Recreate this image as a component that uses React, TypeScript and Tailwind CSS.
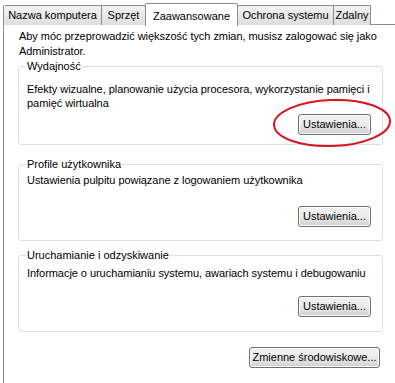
import React from "react";

const font = { fontFamily: '"Liberation Sans", Arial, sans-serif' };

function Tab({ label, w, selected }: { label: string; w: string; selected?: boolean }) {
  return selected ? (
    <div
      className={`${w} h-[23px] -ml-px mb-[-1px] relative z-10 border border-b-0 border-[#898c95] bg-white flex items-start justify-center pt-[4px] text-[11px] text-black rounded-t-[2px] whitespace-nowrap`}
    >
      {label}
    </div>
  ) : (
    <div
      className={`${w} h-[20px] -ml-px border border-b-0 border-[#898c95] bg-gradient-to-b from-[#f3f3f3] to-[#dedede] flex items-center justify-center text-[11px] text-black rounded-t-[2px] whitespace-nowrap`}
    >
      {label}
    </div>
  );
}

function Btn({ label, w }: { label: string; w: string }) {
  return (
    <div
      className={`${w} h-[21px] border border-[#707070] rounded-[3px] flex items-center justify-center text-[11px] text-black whitespace-nowrap bg-gradient-to-b from-[#f2f2f2] via-[#ebebeb] to-[#cfcfcf] shadow-[inset_0_0_0_1px_#fcfcfc]`}
    >
      {label}
    </div>
  );
}

function Group({
  title,
  lines,
  h,
  top,
  btnTop,
}: {
  title: string;
  lines: string[];
  h: string;
  top: string;
  btnTop: string;
}) {
  return (
    <fieldset className={`${h} w-[365px] border border-[#d5dfe5] rounded-[3px] pl-[8px] pr-[11px] ml-[14px] mt-0`}>
      <legend className="px-[1px] ml-[-1px] text-[11px] leading-[14px] text-black whitespace-nowrap">{title}</legend>
      <div className={`${top} text-[11px] leading-[14px] text-black whitespace-nowrap tracking-[-0.05px]`}>
        {lines.map((l) => (
          <div key={l}>{l}</div>
        ))}
      </div>
      <div className={`${btnTop} flex justify-end`}>
        <Btn label="Ustawienia..." w="w-[73px]" />
      </div>
    </fieldset>
  );
}

export default function App() {
  return (
    <div className="relative w-[395px] h-[383px] bg-white overflow-hidden" style={font}>
      <div className="flex items-end h-[25px] pl-[4px] pt-[2px]">
        <Tab label="Nazwa komputera" w="w-[99px]" />
        <Tab label="Sprzęt" w="w-[45px]" />
        <Tab label="Zaawansowane" w="w-[93px]" selected />
        <Tab label="Ochrona systemu" w="w-[97px]" />
        <Tab label="Zdalny" w="w-[38px]" />
      </div>
      <div className="ml-[3px] -mt-px border-l border-t border-[#898c95] h-[400px] bg-white">
        <div className="pl-[15px] pt-[4px] text-[11px] leading-[15px] text-black whitespace-nowrap tracking-[-0.05px]">
          <div>Aby móc przeprowadzić większość tych zmian, musisz zalogować się jako</div>
          <div>Administrator.</div>
        </div>
        <div className="flex flex-col">
          <Group
            title="Wydajność"
            lines={["Efekty wizualne, planowanie użycia procesora, wykorzystanie pamięci i", "pamięć wirtualna"]}
            h="h-[86px]"
            top="mt-[9px]"
            btnTop="mt-[4px]"
          />
          <div className="h-[12px]" />
          <Group
            title="Profile użytkownika"
            lines={["Ustawienia pulpitu powiązane z logowaniem użytkownika"]}
            h="h-[84px]"
            top="mt-[2px]"
            btnTop="mt-[19px]"
          />
          <div className="h-[7px]" />
          <Group
            title="Uruchamianie i odzyskiwanie"
            lines={["Informacje o uruchamianiu systemu, awariach systemu i debugowaniu"]}
            h="h-[84px]"
            top="mt-[4px]"
            btnTop="mt-[16px]"
          />
          <div className="flex justify-end w-[376px] mt-[15px]">
            <Btn label="Zmienne środowiskowe..." w="w-[131px]" />
          </div>
        </div>
      </div>
      <svg className="absolute left-[271px] top-[97px]" width="122" height="52" viewBox="0 0 122 52">
        <ellipse cx="61" cy="26" rx="58" ry="23" fill="none" stroke="#d8141c" strokeWidth="2" transform="rotate(-2 61 26)" />
      </svg>
    </div>
  );
}
